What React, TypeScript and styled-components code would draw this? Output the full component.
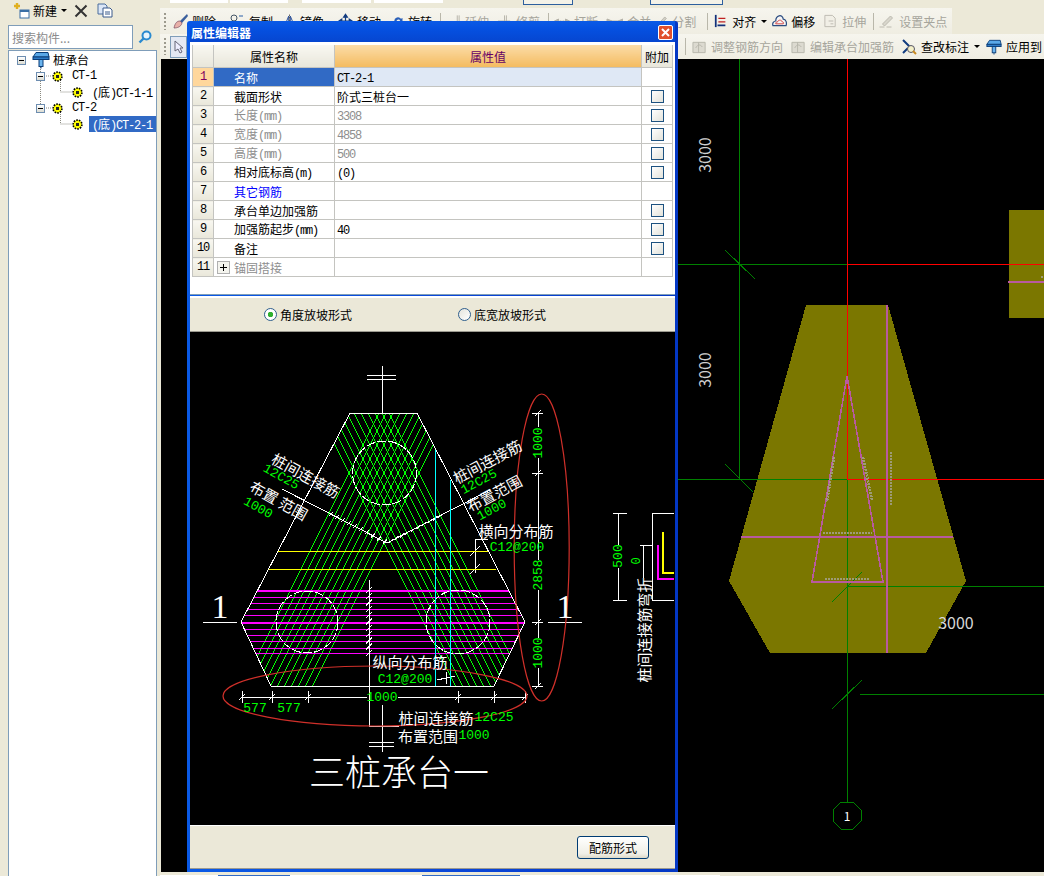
import React from 'react';
import styled, { createGlobalStyle } from 'styled-components';

const UI_FONT = '"Noto Sans CJK SC", "Liberation Sans", sans-serif';
const MONO_FONT = '"Liberation Mono", "Noto Sans CJK SC", monospace';

const GlobalStyle = createGlobalStyle`
  html, body {
    margin: 0;
    padding: 0;
    background: #ece9d8;
    font-family: ${UI_FONT};
    font-size: 12px;
    color: #000;
  }
`;

const range = (n: number) => Array.from({ length: n }, (_, i) => i);

/* ---------- icons ---------- */

const Gear = () => (
  <svg width="11" height="11" viewBox="0 0 11 11">
    <circle cx="5.5" cy="5.5" r="4.4" fill="#ffff00" stroke="#000" strokeWidth="1.6" strokeDasharray="1.6 1.1" />
    <rect x="4" y="4" width="3" height="3" fill="#222" />
  </svg>
);

const PileCap = ({ size = 18 }: { size?: number }) => (
  <svg width={size} height={size} viewBox="0 0 18 18">
    <path d="M4 1.5h12l1 4.5H1z" fill="#5aa8e8" stroke="#0b3d78" />
    <rect x="1" y="6" width="16" height="2.5" fill="#2e7cc8" stroke="#0b3d78" />
    <rect x="7" y="8.5" width="4" height="7" fill="#6bb4ee" stroke="#0b3d78" />
    <path d="M9 15.5v2" stroke="#0b3d78" />
  </svg>
);

const toolIcons: Record<string, React.ReactNode> = {
  brush: (
    <>
      <path d="M15 1 8 8l2 2 6-7z" fill="#3a5f9c" />
      <path d="M8 8c-3 0-5 2-6 7 3 0 7-1 8-5z" fill="#e8b0a8" stroke="#7a4a60" strokeWidth=".7" />
    </>
  ),
  copy: (
    <>
      <circle cx="5" cy="5" r="3" fill="none" stroke="#456" />
      <path d="M10 3h4M13 8l2 2-2 2" stroke="#2a5fa8" fill="none" />
      <path d="M3 12h7" stroke="#889" />
    </>
  ),
  mirror: (
    <>
      <path d="M7 2 2 14h5zM9 2l5 12H9z" fill="none" stroke="#2a4f98" strokeWidth="1.2" />
      <path d="M8 0v16" stroke="#444" strokeDasharray="2 1" />
    </>
  ),
  move: <path d="M8 1v14M1 8h14M8 1 6 4h4zM8 15l-2-3h4zM1 8l3-2v4zM15 8l-3-2v4z" fill="#123c80" stroke="#123c80" strokeWidth="1.3" />,
  rotate: <path d="M3 8a5 5 0 0 1 9-3l2-1v5h-5l2-2a3 3 0 0 0-5 1zM3 10l4 5H3z" fill="#2a5fb8" />,
  extend: <path d="M1 10h9M12 2v12M14 2v12M8 8l2 2-2 2" stroke="#b4b2a8" fill="none" />,
  trim: <path d="M1 8h13M8 2v12M10 2v12" stroke="#b4b2a8" fill="none" />,
  cut: <path d="M1 8l4-2v4zM16 8l-4-2v4zM6 8h2M9 8h2" fill="#b4b2a8" stroke="#b4b2a8" />,
  merge: <path d="M1 6l5 2-5 2zM17 6l-5 2 5 2zM6 8h6" fill="#b4b2a8" stroke="#b4b2a8" />,
  split: <path d="M2 14 12 3l2 2L4 15zM2 12h3" fill="#d0cec4" stroke="#b4b2a8" />,
  align: (
    <>
      <path d="M2 1v14" stroke="#12307a" strokeWidth="2" />
      <path d="M5 5h8M5 9h8" stroke="#c02020" strokeWidth="1.5" />
      <path d="M4 13h9" stroke="#12307a" strokeWidth="2" />
    </>
  ),
  offset: (
    <>
      <path d="M1 13c-1-3 1-5 3-5 0-6 7-8 8-2 3 0 4 4 3 7z" fill="#f4f4f4" stroke="#2b4c80" strokeWidth="1.3" />
      <path d="M4 11c0-2 1-2 2-2 0-2 4-3 5 0 1 0 2 1 1 2z" fill="none" stroke="#d04040" />
    </>
  ),
  stretch: <path d="M2 2h8l3 3v9H2zM6 8h5M8 11h3" fill="#f1efe6" stroke="#bcbab0" />,
  grip: <path d="M1 14h5M8 14h5M4 11l8-8 2 2-8 8z" fill="#d8d6cc" stroke="#bcbab0" />,
  rebar: <path d="M1 3h13v11H1zM7 3v11M4 9c2-4 5-4 7-1" fill="#dcdad0" stroke="#b8b6ac" />,
  annotate: (
    <>
      <path d="M2 1 9 8M2 14l5-5" stroke="#123c80" strokeWidth="2" />
      <circle cx="10" cy="10" r="3.5" fill="#f4f0c8" stroke="#556" />
      <path d="M12 12l3 3" stroke="#c88a20" strokeWidth="2" />
    </>
  )
};

/* ---------- left panel ---------- */

const LeftPanel = styled.aside`
  width: 160px;
  flex: none;
  display: flex;
  flex-direction: column;
  background: #ece9d8;
`;

const LeftBar = styled.div`
  height: 25px;
  display: flex;
  align-items: center;
  box-sizing: border-box;
  padding: 0 0 4px 13px;
  font-size: 12px;
`;

const NewIcon = styled.span`
  display: flex;
  width: 20px;
`;

const Caret = styled.span<{ $before?: number }>`
  width: 0;
  height: 0;
  margin-left: ${p => p.$before ?? 4}px;
  border-left: 3px solid transparent;
  border-right: 3px solid transparent;
  border-top: 3px solid #000;
`;

const LeftTool = styled.span<{ $before: number }>`
  display: flex;
  margin-left: ${p => p.$before}px;
`;

const SearchRow = styled.div`
  height: 25px;
  display: flex;
  align-items: flex-start;
  padding-left: 8px;
`;

const SearchInput = styled.input`
  box-sizing: border-box;
  width: 125px;
  height: 24px;
  border: 1px solid #7f9db9;
  background: #fff;
  padding: 0 3px;
  font: 12px ${UI_FONT};
  &::placeholder {
    color: #8c8c8c;
    opacity: 1;
  }
`;

const SearchButton = styled.span`
  display: flex;
  margin: 5px 0 0 5px;
`;

const TreeBox = styled.div`
  position: relative;
  flex: 1;
  box-sizing: border-box;
  margin: 0 3px 0 8px;
  padding-top: 1px;
  background: #fff;
  border: 1px solid #7f9db9;
  border-bottom: none;
`;

const TreeLines = styled.svg`
  position: absolute;
  left: 0;
  top: 0;
`;

const TreeRow = styled.div<{ $indent: number }>`
  position: relative;
  height: 16px;
  display: flex;
  align-items: center;
  padding-left: ${p => p.$indent}px;
  line-height: 16px;
`;

const Expander = styled.span<{ $after?: number }>`
  box-sizing: border-box;
  width: 9px;
  height: 9px;
  margin-right: ${p => p.$after ?? 7}px;
  flex: none;
  border: 1px solid #6d8db0;
  background: linear-gradient(#fff, #dcdcd2);
  display: flex;
  align-items: center;
  justify-content: center;
  &::after {
    content: '';
    width: 5px;
    height: 1px;
    background: #000;
  }
`;

const TreeLabel = styled.span<{ $left: number; $selected?: boolean }>`
  margin-left: ${p => p.$left}px;
  padding: 0 3px;
  font-family: ${MONO_FONT};
  font-size: 12px;
  letter-spacing: -1.2px;
  height: 16px;
  flex: ${p => (p.$selected ? 1 : 'none')};
  color: ${p => (p.$selected ? '#fff' : '#000')};
  background: ${p => (p.$selected ? '#316ac5' : 'transparent')};
`;

const CjkInline = styled.span`
  font-family: ${UI_FONT};
  letter-spacing: 0;
`;

const RootLabel = styled.span`
  margin-left: 3px;
`;

/* ---------- toolbars ---------- */

const Main = styled.main`
  flex: 1;
  min-width: 0;
  display: flex;
  flex-direction: column;
`;

const TopStrip = styled.div`
  height: 8px;
  display: flex;
  align-items: flex-start;
  overflow: hidden;
  padding-left: 10px;
`;

const ComboStub = styled.span<{ $width: number; $before?: number }>`
  box-sizing: border-box;
  width: ${p => p.$width}px;
  height: 3px;
  margin-left: ${p => p.$before ?? 2}px;
  background: #fff;
  flex: none;
`;

const ActiveStub = styled.span<{ $width: number; $before: number }>`
  box-sizing: border-box;
  width: ${p => p.$width}px;
  height: 5px;
  margin-left: ${p => p.$before}px;
  background: #f4f2e8;
  border: 1px solid #2d5f9e;
  border-top: none;
  flex: none;
`;

const Toolbar = styled.div<{ $height: number; $fit?: boolean }>`
  height: ${p => p.$height}px;
  width: ${p => (p.$fit ? '792px' : 'auto')};
  display: flex;
  align-items: center;
  box-sizing: border-box;
  padding-left: 4px;
  background: linear-gradient(#f6f5ee, #efede2);
  white-space: nowrap;
`;

const Grip = styled.span`
  width: 2px;
  height: 17px;
  margin-right: 4px;
  flex: none;
  background: repeating-linear-gradient(#9c9a8e 0 2px, transparent 2px 4px);
`;

const Separator = styled.span<{ $before: number }>`
  width: 1px;
  height: 17px;
  flex: none;
  margin-left: ${p => p.$before}px;
  background: #b9b7aa;
`;

const ToolItem = styled.span<{ $before: number; $disabled?: boolean }>`
  display: flex;
  align-items: center;
  gap: 4px;
  flex: none;
  margin-left: ${p => p.$before}px;
  color: ${p => (p.$disabled ? '#a6a59c' : '#000')};
  font-size: 12px;
`;

const SelectButton = styled.span`
  box-sizing: border-box;
  width: 17px;
  height: 22px;
  display: flex;
  align-items: center;
  justify-content: center;
  border: 1px solid #7f9db9;
  background: #e4e8f2;
  flex: none;
`;

const CadCanvas = styled.div`
  flex: 1;
  min-height: 0;
  margin-left: 1px;
  background: #000;
`;

const CadSvg = styled.svg`
  display: block;
  shape-rendering: crispEdges;
`;

const BottomStrip = styled.div`
  height: 4px;
  display: flex;
  align-items: flex-end;
  background: #ece9d8;
  overflow: hidden;
`;

const StatusCell = styled.span<{ $width: number; $blue?: boolean }>`
  width: ${p => p.$width}px;
  height: 1px;
  flex: none;
  background: ${p => (p.$blue ? '#316ac5' : '#fff')};
`;

/* ---------- dialog ---------- */

const Dialog = styled.section`
  position: absolute;
  left: 187px;
  top: 21px;
  width: 491px;
  height: 851px;
  box-sizing: border-box;
  display: flex;
  flex-direction: column;
  padding: 0 3px 3px;
  background: linear-gradient(90deg, #0a5ae6, #0a46d8 55%, #0337c4);
  border-radius: 3px 3px 0 0;
`;

const TitleBar = styled.header`
  height: 21px;
  flex: none;
  display: flex;
  align-items: center;
  justify-content: space-between;
  padding: 2px 2px 0 1px;
  box-sizing: border-box;
  color: #fff;
  font-weight: 700;
  font-size: 12px;
  background: linear-gradient(#0a5ae6, #0550e0 40%, #0646d0);
`;

const CloseButton = styled.span`
  width: 13px;
  height: 13px;
  display: flex;
  align-items: center;
  justify-content: center;
  border: 1px solid #fff;
  border-radius: 2px;
  background: #e0502c;
`;

const TableArea = styled.div`
  height: 253px;
  flex: none;
  box-sizing: border-box;
  padding: 3px 2px 0;
  background: #fff;
  border-bottom: 1px solid #7f9db9;
`;

const Grid = styled.table`
  width: 480px;
  border-collapse: collapse;
  table-layout: fixed;
  font-size: 12px;
`;

const HeadCell = styled.th<{ $accent?: boolean }>`
  height: 22px;
  padding: 0;
  border: 1px solid #c4c4c0;
  border-top: none;
  font-weight: 400;
  color: ${p => (p.$accent ? '#660066' : '#000')};
  background: ${p =>
    p.$accent ? 'linear-gradient(#fbdca8, #f4bb60)' : 'linear-gradient(#f9f8f2, #e8e6da)'};
`;

const IndexCell = styled.td<{ $active?: boolean }>`
  height: 18px;
  padding: 0;
  text-align: center;
  font-family: ${MONO_FONT};
  font-size: 12px;
  letter-spacing: -1.2px;
  border: 1px solid #c4c4c0;
  color: ${p => (p.$active ? '#800060' : '#000')};
  background: ${p => (p.$active ? '#ffd79c' : 'linear-gradient(#f8f7f0, #e9e7da)')};
`;

const NameCell = styled.td<{ $tone: 'normal' | 'muted' | 'link' | 'selected' }>`
  position: relative;
  padding: 0 0 0 20px;
  border: 1px solid #c4c4c0;
  color: ${p =>
    p.$tone === 'muted' ? '#8e8e8e' : p.$tone === 'link' ? '#0000ff' : p.$tone === 'selected' ? '#fff' : '#000'};
  background: ${p => (p.$tone === 'selected' ? '#316ac5' : '#fff')};
`;

const ValueCell = styled.td<{ $muted?: boolean; $active?: boolean }>`
  padding: 0 0 0 2px;
  border: 1px solid #c4c4c0;
  color: ${p => (p.$muted ? '#8e8e8e' : '#000')};
  background: ${p => (p.$active ? '#dfe8f5' : '#fff')};
`;

const Latin = styled.span`
  font-family: ${MONO_FONT};
  font-size: 12px;
  letter-spacing: -1.2px;
  white-space: pre;
`;

const CheckCell = styled.td`
  padding: 0;
  border: 1px solid #c4c4c0;
  background: #fff;
  text-align: center;
  line-height: 0;
`;

const CheckBox = styled.span`
  display: inline-block;
  box-sizing: border-box;
  width: 13px;
  height: 13px;
  border: 1px solid #1c5180;
  background: linear-gradient(135deg, #fff, #e2e2da);
`;

const PlusBox = styled.span`
  position: absolute;
  left: 3px;
  top: 3px;
  box-sizing: border-box;
  width: 13px;
  height: 13px;
  border: 1px solid #b0b0b0;
  background:
    linear-gradient(#000, #000) center / 7px 1px no-repeat,
    linear-gradient(#000, #000) center / 1px 7px no-repeat,
    #f4f4ee;
`;

const RadioStrip = styled.div`
  height: 34px;
  flex: none;
  display: flex;
  align-items: center;
  gap: 106px;
  box-sizing: border-box;
  padding-left: 74px;
  margin-top: 3px;
  background: #ebe8d8;
  border-bottom: 1px solid #9c9a90;
  box-shadow: 0 -2px 0 #fff;
`;

const RadioOption = styled.span`
  display: flex;
  align-items: center;
  gap: 3px;
`;

const RadioDot = styled.span<{ $on?: boolean }>`
  box-sizing: border-box;
  width: 13px;
  height: 13px;
  border-radius: 50%;
  border: 1px solid #2f5f8e;
  background: ${p =>
    p.$on
      ? 'radial-gradient(circle, #30b030 0 2.5px, #fff 3px)'
      : 'linear-gradient(135deg, #e4e4dc, #fff)'};
`;

const Drawing = styled.div`
  flex: 1;
  min-height: 0;
  background: #000;
`;

const DialogFooter = styled.footer`
  height: 44px;
  flex: none;
  display: flex;
  align-items: center;
  justify-content: flex-end;
  padding-right: 26px;
  box-sizing: border-box;
  background: #ebe8d8;
  border-top: 1px solid #fff;
  border-bottom: 1px solid #9c9a90;
`;

const FooterButton = styled.button`
  box-sizing: border-box;
  width: 72px;
  height: 23px;
  padding: 0;
  border: 1px solid #003c74;
  border-radius: 3px;
  background: linear-gradient(#fff, #f0efe6 80%, #dcd8c8);
  font: 12px ${UI_FONT};
  color: #000;
`;

/* ---------- CAD text ---------- */

const CadText = styled.text<{ $color: string; $size: number; $mono?: boolean; $thin?: boolean }>`
  fill: ${p => p.$color};
  font-size: ${p => p.$size}px;
  font-family: ${p => (p.$mono ? '"Liberation Mono", monospace' : UI_FONT)};
  font-weight: ${p => (p.$thin ? 300 : 400)};
  text-anchor: middle;
  dominant-baseline: central;
`;

type LabelProps = {
  x: number;
  y: number;
  rotate?: number;
  color?: string;
  size?: number;
  mono?: boolean;
  thin?: boolean;
  children: React.ReactNode;
};

const Label = ({ x, y, rotate, color = '#fff', size, mono, thin, children }: LabelProps) => (
  <CadText
    x={x}
    y={y}
    $color={color}
    $size={size ?? (mono ? 13 : 14)}
    $mono={mono}
    $thin={thin}
    transform={rotate ? `rotate(${rotate} ${x} ${y})` : undefined}
  >
    {children}
  </CadText>
);

/* ---------- data ---------- */

type ToolDef = { label: string; icon: string; w: number; before: number; disabled?: boolean; caret?: boolean } | { sep: number };

const topTools: ToolDef[] = [
  { label: '删除', icon: 'brush', w: 16, before: 2 },
  { label: '复制', icon: 'copy', w: 16, before: 13 },
  { label: '镜像', icon: 'mirror', w: 13, before: 10 },
  { label: '移动', icon: 'move', w: 15, before: 14 },
  { label: '旋转', icon: 'rotate', w: 12, before: 11 },
  { sep: 8 },
  { label: '延伸', icon: 'extend', w: 15, before: 5, disabled: true },
  { label: '修剪', icon: 'trim', w: 15, before: 8, disabled: true },
  { sep: 8 },
  { label: '打断', icon: 'cut', w: 17, before: 4, disabled: true },
  { label: '合并', icon: 'merge', w: 18, before: 7, disabled: true },
  { label: '分割', icon: 'split', w: 13, before: 4, disabled: true },
  { sep: 11 },
  { label: '对齐', icon: 'align', w: 14, before: 6, caret: true },
  { label: '偏移', icon: 'offset', w: 15, before: 5 },
  { label: '拉伸', icon: 'stretch', w: 15, before: 8, disabled: true },
  { sep: 7 },
  { label: '设置夹点', icon: 'grip', w: 17, before: 4, disabled: true }
];

const lowerTools: ToolDef[] = [
  { sep: 498 },
  { label: '调整钢筋方向', icon: 'rebar', w: 15, before: 6, disabled: true },
  { label: '编辑承台加强筋', icon: 'rebar', w: 15, before: 8, disabled: true },
  { label: '查改标注', icon: 'annotate', w: 16, before: 7, caret: true }
];

type PropRow = {
  name: string;
  unit?: string;
  value?: string;
  latin?: boolean;
  tone?: 'normal' | 'muted' | 'link' | 'selected';
  check?: boolean;
  plus?: boolean;
};

const rows: PropRow[] = [
  { name: '名称', value: 'CT-2-1', latin: true, tone: 'selected' },
  { name: '截面形状', value: '阶式三桩台一', check: true },
  { name: '长度', unit: '(mm)', value: '3308', latin: true, tone: 'muted', check: true },
  { name: '宽度', unit: '(mm)', value: '4858', latin: true, tone: 'muted', check: true },
  { name: '高度', unit: '(mm)', value: '500', latin: true, tone: 'muted', check: true },
  { name: '相对底标高', unit: '(m)', value: '(0)', latin: true, check: true },
  { name: '其它钢筋', tone: 'link' },
  { name: '承台单边加强筋', check: true },
  { name: '加强筋起步', unit: '(mm)', value: '40', latin: true, check: true },
  { name: '备注', check: true },
  { name: '锚固搭接', tone: 'muted', plus: true }
];

/* ---------- drawings ---------- */

const HEX = '350,413 417,413 525,622 494,686 271,686 241,622';
const MAGENTA_Y = [590, 597, 603, 609, 615, 622, 629, 635, 641, 648, 653];

// one band of green rebar, running through the top pile and a lower pile
const HatchBand = ({ dir }: { dir: 1 | -1 }) => (
  <g stroke="#00ff00" strokeWidth="1">
    {range(11).map(i => {
      const off = (i - 5) * 7;
      const x0 = 384 + off - dir * 120;
      const x1 = 384 + off + dir * 150;
      return <line key={i} x1={x0} y1={473 - 240} x2={x1} y2={473 + 300} />;
    })}
  </g>
);

const Tick = ({ x, y, r = 4 }: { x: number; y: number; r?: number }) => (
  <line x1={x - r} y1={y + r} x2={x + r} y2={y - r} stroke="#fff" />
);

const RebarDrawing = () => (
  <CadSvg width="484" height="492" viewBox="190 332 484 492">
    <defs>
      <clipPath id="hex">
        <polygon points={HEX} />
      </clipPath>
    </defs>

    <g clipPath="url(#hex)">
      <HatchBand dir={1} />
      <HatchBand dir={-1} />
      {MAGENTA_Y.map(y => (
        <line key={y} x1="230" y1={y + 0.5} x2="540" y2={y + 0.5} stroke="#ff00ff" strokeWidth={y === 590 || y === 622 ? 2 : 1} />
      ))}
    </g>

    <polygon points={HEX} fill="none" stroke="#fff" />
    <g fill="none" stroke="#fff" strokeDasharray="9 2">
      <circle cx="384.5" cy="473" r="32" />
      <circle cx="307" cy="622" r="31" />
      <circle cx="458" cy="622" r="32" />
    </g>

    <g stroke="#fff" fill="none">
      <path d="M382.5 366V413M367 375H396M367 379H396" />
      <path d="M282 489 387 543 490 490" />
      <path d="M369.5 580V726M369 726H399M382.5 705V752M369 742H394M369 746H394" />
      <path d="M241 697H367M398 697H525" />
      <path d="M203 622H237M548 622H582" />
      <path d="M475.5 573V539H488" />
    </g>
    {range(10).map(i => (
      <React.Fragment key={i}>
        <Tick x={331 + i * 6} y={514 + i * 3.05} r={2} />
        <Tick x={391 + i * 5.5} y={541 - i * 2.8} r={2} />
      </React.Fragment>
    ))}
    {range(11).map(i => (
      <Tick key={i} x={369} y={590 + i * 6.3} r={3} />
    ))}
    {[242, 272, 308, 458, 494, 525].map(x => (
      <path key={x} d={`M${x} 691V703M${x - 3} 700L${x + 3} 694`} stroke="#fff" />
    ))}
    <Tick x={475} y={551} r={5} />
    <Tick x={475} y={569} r={5} />
    <path d="M437 680 455 676M446 672V684" stroke="#fff" />

    <line x1="278" y1="551.5" x2="488" y2="551.5" stroke="#ffff00" />
    <line x1="269" y1="569.5" x2="496" y2="569.5" stroke="#ffff00" />
    <line x1="435.5" y1="450" x2="435.5" y2="686" stroke="#00ffff" />
    <line x1="450.5" y1="480" x2="450.5" y2="686" stroke="#00ffff" />

    {/* right dimension */}
    <g stroke="#fff" fill="none">
      <path d="M538 413V427M538 458V560M538 590V638M538 668V686" />
      <path d="M532 413H543M532 473H543M532 622H543M532 686H543" />
      <path d="M535 416 541 410M535 476 541 470M535 625 541 619M535 689 541 683" />
    </g>
    <Label x={538} y={443} rotate={-90} color="#00ff00" mono>1000</Label>
    <Label x={538} y={575} rotate={-90} color="#00ff00" mono>2858</Label>
    <Label x={538} y={653} rotate={-90} color="#00ff00" mono>1000</Label>

    <ellipse cx="541.7" cy="547.5" rx="27.5" ry="153.5" fill="none" stroke="#d0302a" strokeWidth="1.2" shapeRendering="geometricPrecision" />
    <ellipse cx="375" cy="696" rx="152" ry="30" fill="none" stroke="#d0302a" strokeWidth="1.2" shapeRendering="geometricPrecision" />

    <Label x={306} y={475} rotate={29} size={15}>桩间连接筋</Label>
    <Label x={281} y={477} rotate={29} color="#00ff00" mono>12C25</Label>
    <Label x={279} y={500} rotate={29} size={15}>布置 范围</Label>
    <Label x={258} y={508} rotate={29} color="#00ff00" mono>1000</Label>

    <Label x={487} y={461} rotate={-28} size={15}>桩间连接筋</Label>
    <Label x={479} y={482} rotate={-28} color="#00ff00" mono>12C25</Label>
    <Label x={494} y={493} rotate={-28} size={15}>布置范围</Label>
    <Label x={492} y={510} rotate={-28} color="#00ff00" mono>1000</Label>

    <Label x={516} y={530} size={15}>横向分布筋</Label>
    <Label x={517} y={547} color="#00ff00" mono>C12@200</Label>
    <Label x={410} y={661} size={15}>纵向分布筋</Label>
    <Label x={405} y={679} color="#00ff00" mono>C12@200</Label>

    <Label x={382} y={697} color="#00ff00" mono>1000</Label>
    <Label x={255} y={708} color="#00ff00" mono>577</Label>
    <Label x={289} y={708} color="#00ff00" mono>577</Label>
    <Label x={436} y={717} size={15}>桩间连接筋</Label>
    <Label x={494} y={717} color="#00ff00" mono>12C25</Label>
    <Label x={428} y={735} size={15}>布置范围</Label>
    <Label x={474} y={735} color="#00ff00" mono>1000</Label>

    <Label x={220} y={606} size={34}>
      <tspan fontFamily='"Liberation Serif", serif'>1</tspan>
    </Label>
    <Label x={565} y={606} size={34}>
      <tspan fontFamily='"Liberation Serif", serif'>1</tspan>
    </Label>
    <Label x={399} y={770} size={36} thin>三桩承台一</Label>

    {/* bend detail */}
    <g stroke="#fff" fill="none">
      <path d="M618 513V545M618 568V600M613 513H627M613 600H627" />
      <path d="M674 513H652V600H674" />
      <path d="M643 545V578M640 545H652" />
    </g>
    <Label x={618} y={556} rotate={-90} color="#00ff00" mono>500</Label>
    <Label x={637} y={561} rotate={-90} color="#00ff00" size={12} mono>0</Label>
    <Label x={643} y={630} rotate={-90} size={15}>桩间连接筋弯折</Label>
    <path d="M663 532V573H674" stroke="#ffff00" strokeWidth="2" fill="none" />
    <path d="M658 545V579H674" stroke="#ff00ff" strokeWidth="2" fill="none" />
  </CadSvg>
);

const PlanDrawing = () => (
  <CadSvg width="883" height="813" viewBox="161 59 883 813">
    <polygon points="806,305 888,305 966,581 926,653 770,653 729,581" fill="#7b7700" />
    <rect x="1009" y="210" width="35" height="108" fill="#7b7700" />

    <g stroke="#008000">
      <line x1="739.5" y1="59" x2="739.5" y2="480" />
      <line x1="678" y1="264.5" x2="847" y2="264.5" />
      <line x1="678" y1="479.5" x2="847" y2="479.5" />
      <line x1="847.5" y1="479" x2="847.5" y2="802" />
      <line x1="847" y1="586.5" x2="1044" y2="586.5" />
      <line x1="860" y1="694.5" x2="1044" y2="694.5" />
      <line x1="725" y1="250" x2="755" y2="279" />
      <line x1="725" y1="464" x2="753" y2="492" />
      <line x1="832" y1="602" x2="862" y2="572" />
      <line x1="832" y1="709" x2="862" y2="680" />
      <polygon points="841,802 853,802 861,810 861,821 853,829 841,829 833,821 833,810" fill="none" />
    </g>
    <g stroke="#ff0000">
      <line x1="847.5" y1="59" x2="847.5" y2="479" />
      <line x1="847" y1="264.5" x2="1044" y2="264.5" />
      <line x1="847" y1="479.5" x2="1044" y2="479.5" />
    </g>

    <g stroke="#b85aa0" fill="none">
      <polygon points="847,376 883,582 812,582" strokeWidth="1.6" />
      <line x1="887" y1="305" x2="887" y2="653" strokeWidth="2" />
      <line x1="741" y1="537" x2="953" y2="537" strokeWidth="2" />
      <line x1="1008" y1="282" x2="1044" y2="282" strokeWidth="2" />
    </g>
    <g stroke="#a8a494" strokeOpacity=".8" strokeWidth="2.5" strokeDasharray="2 1">
      <line x1="823" y1="533" x2="872" y2="533" />
      <line x1="825" y1="579" x2="870" y2="579" />
      <line x1="891" y1="452" x2="891" y2="505" />
      <line x1="834" y1="457" x2="827" y2="502" />
      <line x1="863" y1="457" x2="872" y2="500" />
      <line x1="1041" y1="277" x2="1044" y2="277" />
    </g>

    <Label x={704} y={155} rotate={-90} color="#cfcfcf" size={16}>3000</Label>
    <Label x={704} y={370} rotate={-90} color="#cfcfcf" size={16}>3000</Label>
    <Label x={956} y={622} color="#d8d8d8" size={16}>3000</Label>
    <Label x={847} y={815} size={12}>1</Label>
  </CadSvg>
);

/* ---------- page ---------- */

const Page = styled.div`
  position: relative;
  width: 1044px;
  height: 876px;
  display: flex;
  overflow: hidden;
`;

const renderTools = (tools: ToolDef[]) =>
  tools.map((t, i) =>
    'sep' in t ? (
      <Separator key={i} $before={t.sep} />
    ) : (
      <React.Fragment key={t.label}>
        <ToolItem $before={t.before} $disabled={t.disabled}>
          <svg width={t.w} height="16" viewBox="0 0 16 16">
            {toolIcons[t.icon]}
          </svg>
          {t.label}
        </ToolItem>
        {t.caret && <Caret $before={5} />}
      </React.Fragment>
    )
  );

const App = () => (
  <Page>
    <GlobalStyle />
    <LeftPanel>
      <LeftBar>
        <NewIcon>
          <svg width="17" height="17" viewBox="0 0 17 17">
            <path d="M4 1v6M1 4h6" stroke="#e0b020" strokeWidth="2.4" />
            <rect x="7" y="8" width="9" height="8" fill="#fff" stroke="#3a6ea5" />
            <rect x="7" y="8" width="9" height="2" fill="#3a6ea5" />
          </svg>
        </NewIcon>
        新建
        <Caret />
        <LeftTool $before={7}>
          <svg width="14" height="14" viewBox="0 0 14 14">
            <path d="M1.5 1.5 12.5 12.5M12.5 1.5 1.5 12.5" stroke="#333" strokeWidth="2" />
          </svg>
        </LeftTool>
        <LeftTool $before={9}>
          <svg width="16" height="15" viewBox="0 0 16 15">
            <path d="M1 1h7l2 2v8H1z" fill="#dbe6f6" stroke="#4a6c9c" />
            <path d="M6 5h7l2 2v7H6z" fill="#fff" stroke="#3a5a8c" />
            <path d="M8 9h5M8 11h5" stroke="#3a5a8c" />
          </svg>
        </LeftTool>
      </LeftBar>
      <SearchRow>
        <SearchInput placeholder="搜索构件..." readOnly />
        <SearchButton>
          <svg width="14" height="14" viewBox="0 0 14 14">
            <circle cx="8.5" cy="5.5" r="4" fill="#e8f4fc" stroke="#2a8ad0" strokeWidth="2" />
            <path d="M5.5 8.5 1.5 12.5" stroke="#2a8ad0" strokeWidth="2.4" />
          </svg>
        </SearchButton>
      </SearchRow>
      <TreeBox>
        <TreeLines width="100" height="90">
          <path
            d="M31.5 14V58M37 25H43M51.5 29V41H63M37 57H43M51.5 61V73H63"
            stroke="#8a8a80"
            fill="none"
            strokeDasharray="1 1"
          />
        </TreeLines>
        <TreeRow $indent={8}>
          <Expander $after={6} />
          <PileCap />
          <RootLabel>桩承台</RootLabel>
        </TreeRow>
        <TreeRow $indent={27}>
          <Expander />
          <Gear />
          <TreeLabel $left={6}>CT-1</TreeLabel>
        </TreeRow>
        <TreeRow $indent={63}>
          <Gear />
          <TreeLabel $left={6}>
            (<CjkInline>底</CjkInline>)CT-1-1
          </TreeLabel>
        </TreeRow>
        <TreeRow $indent={27}>
          <Expander />
          <Gear />
          <TreeLabel $left={6}>CT-2</TreeLabel>
        </TreeRow>
        <TreeRow $indent={63}>
          <Gear />
          <TreeLabel $left={6} $selected>
            (<CjkInline>底</CjkInline>)CT-2-1
          </TreeLabel>
        </TreeRow>
      </TreeBox>
    </LeftPanel>

    <Main>
      <TopStrip>
        <ComboStub $width={58} $before={0} />
        <ComboStub $width={58} />
        <ComboStub $width={69} $before={14} />
        <ComboStub $width={69} $before={3} />
        <ActiveStub $width={50} $before={80} />
        <ActiveStub $width={73} $before={77} />
      </TopStrip>
      <Toolbar $height={26} $fit>
        <Grip />
        {renderTools(topTools)}
      </Toolbar>
      <Toolbar $height={25}>
        <Grip />
        <SelectButton>
          <svg width="10" height="14" viewBox="0 0 10 14">
            <path d="M1 1v10l3-2 2 4 2-1-2-4h3z" fill="#eef" stroke="#667" />
          </svg>
        </SelectButton>
        {renderTools(lowerTools)}
        <ToolItem $before={6}>
          <PileCap size={16} />
          应用到
        </ToolItem>
      </Toolbar>
      <CadCanvas>
        <PlanDrawing />
      </CadCanvas>
      <BottomStrip>
        <StatusCell $width={58} />
        <StatusCell $width={72} $blue />
        <StatusCell $width={132} />
        <StatusCell $width={98} $blue />
        <StatusCell $width={200} />
      </BottomStrip>
    </Main>

    <Dialog>
      <TitleBar>
        属性编辑器
        <CloseButton>
          <svg width="9" height="9" viewBox="0 0 9 9">
            <path d="M1 1 8 8M8 1 1 8" stroke="#fff" strokeWidth="2" />
          </svg>
        </CloseButton>
      </TitleBar>
      <TableArea>
        <Grid>
          <colgroup>
            <col width="21" />
            <col width="121" />
            <col width="307" />
            <col width="31" />
          </colgroup>
          <thead>
            <tr>
              <HeadCell />
              <HeadCell>属性名称</HeadCell>
              <HeadCell $accent>属性值</HeadCell>
              <HeadCell>附加</HeadCell>
            </tr>
          </thead>
          <tbody>
            {rows.map((row, i) => (
              <tr key={row.name}>
                <IndexCell $active={i === 0}>{i + 1}</IndexCell>
                <NameCell $tone={row.tone ?? 'normal'}>
                  {row.plus && <PlusBox />}
                  {row.name}
                  {row.unit && <Latin>{row.unit}</Latin>}
                </NameCell>
                <ValueCell $muted={row.tone === 'muted'} $active={i === 0}>
                  {row.latin ? <Latin>{row.value}</Latin> : row.value}
                </ValueCell>
                <CheckCell>{row.check && <CheckBox />}</CheckCell>
              </tr>
            ))}
          </tbody>
        </Grid>
      </TableArea>
      <RadioStrip>
        <RadioOption>
          <RadioDot $on />
          角度放坡形式
        </RadioOption>
        <RadioOption>
          <RadioDot />
          底宽放坡形式
        </RadioOption>
      </RadioStrip>
      <Drawing>
        <RebarDrawing />
      </Drawing>
      <DialogFooter>
        <FooterButton>配筋形式</FooterButton>
      </DialogFooter>
    </Dialog>
  </Page>
);

export default App;
